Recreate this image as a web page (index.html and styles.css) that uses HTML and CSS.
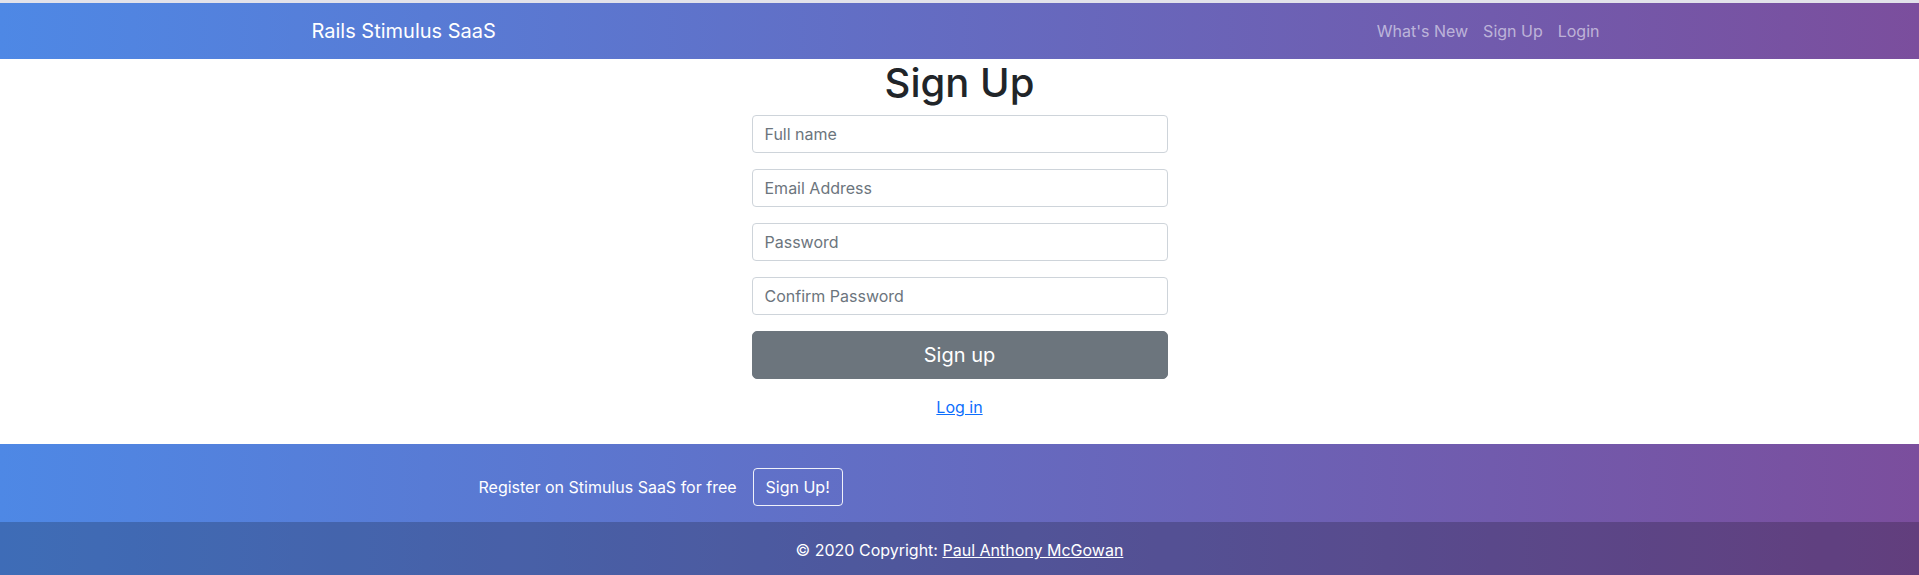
FILE: index.html
```html
<!DOCTYPE html>
<html lang="en">
<head>
<meta charset="utf-8">
<title>Rails Stimulus SaaS</title>
<link rel="stylesheet" href="styles.css">
</head>
<body>
<div class="top-strip"></div>
<nav class="navbar">
  <div class="container nav-inner">
    <a class="brand" href="#">Rails Stimulus SaaS</a>
    <ul class="nav-links">
      <li><a href="#">What's New</a></li>
      <li><a href="#">Sign Up</a></li>
      <li><a href="#">Login</a></li>
    </ul>
  </div>
</nav>
<main class="container main">
  <div class="form-col">
    <h1 class="title">Sign Up</h1>
    <form class="signup-form">
      <input class="form-control" type="text" placeholder="Full name">
      <input class="form-control" type="email" placeholder="Email Address">
      <input class="form-control" type="password" placeholder="Password">
      <input class="form-control" type="password" placeholder="Confirm Password">
      <button class="btn-submit" type="button">Sign up</button>
    </form>
    <div class="login-link"><a href="#">Log in</a></div>
  </div>
</main>
<footer class="footer">
  <section class="cta">
    <div class="container">
      <div class="cta-row">
        <span class="cta-text">Register on Stimulus SaaS for free</span>
        <a class="btn-outline" href="#">Sign Up!</a>
      </div>
    </div>
  </section>
  <div class="copyright">© 2020 Copyright: <a href="#">Paul Anthony McGowan</a></div>
</footer>
</body>
</html>
```

FILE: styles.css
```css
* { box-sizing: border-box; }
html, body { margin: 0; padding: 0; }
body {
  font-family: Inter, "Noto Sans", "Liberation Sans", sans-serif;
  font-size: 16px;
  line-height: 1.5;
  color: #212529;
  background: #fff;
}
.top-strip { height: 3px; background: #e2e2ea; }
.container {
  max-width: 1320px;
  margin: 0 auto;
  padding: 0 12px;
}
.navbar {
  background: linear-gradient(to right, #4e88e5, #7b4e9d);
  padding: 8px 0;
}
.nav-inner {
  display: flex;
  align-items: center;
  justify-content: space-between;
}
.brand {
  color: #fff;
  font-size: 20px;
  line-height: 30px;
  padding: 5px 0;
  text-decoration: none;
}
.nav-links {
  list-style: none;
  display: flex;
  margin: 0;
  padding: 0;
}
.nav-links a {
  display: block;
  padding: 8px 7.5px;
  color: rgba(255, 255, 255, 0.55);
  text-decoration: none;
}
.nav-links li:last-child a { padding-right: 8px; }
.main { display: flex; justify-content: center; }
.form-col {
  width: 440px;
  padding: 0 12px 25px;
}
.title {
  margin: 0 0 8px;
  font-size: 40px;
  line-height: 48px;
  font-weight: 500;
  text-align: center;
}
.signup-form { display: flex; flex-direction: column; }
.form-control {
  display: block;
  width: 100%;
  height: 38px;
  margin-bottom: 16px;
  padding: 6px 12px;
  font-family: inherit;
  font-size: 16px;
  color: #212529;
  border: 1px solid #ced4da;
  border-radius: 4px;
  background: #fff;
}
.form-control::placeholder { color: #6c757d; }
.btn-submit {
  height: 48px;
  width: 100%;
  border: 1px solid #6c757d;
  background: #6c757d;
  color: #fff;
  font-family: inherit;
  font-size: 20px;
  border-radius: 5px;
}
.login-link {
  margin-top: 16px;
  text-align: center;
}
.login-link a { color: #0d6efd; text-decoration: underline; }
.footer {
  background: linear-gradient(to right, #4e88e5, #7b4e9d);
  color: #fff;
}
.cta { padding: 24px 0 16px; }
.cta-row {
  display: flex;
  align-items: center;
  gap: 16px;
  padding-left: 167px;
}
.btn-outline {
  display: inline-block;
  height: 38px;
  padding: 6px 12px;
  line-height: 24px;
  color: #fff;
  text-decoration: none;
  border: 1px solid rgba(255, 255, 255, 0.9);
  border-radius: 4px;
}
.copyright {
  background: rgba(0, 0, 0, 0.2);
  padding: 16px;
  text-align: center;
}
.copyright a { color: #fff; text-decoration: underline; }
```
